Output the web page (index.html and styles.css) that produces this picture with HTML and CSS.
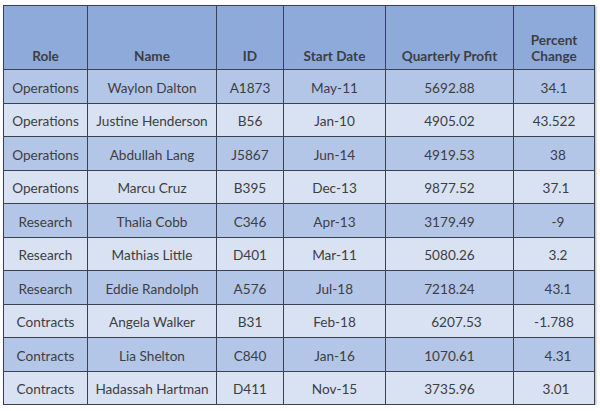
FILE: index.html
```html
<!DOCTYPE html>
<html>
<head>
<meta charset="utf-8">
<link rel="stylesheet" href="styles.css">
</head>
<body>
<table class="data">
  <colgroup>
    <col class="c-role"><col class="c-name"><col class="c-id"><col class="c-date"><col class="c-profit"><col class="c-pct">
  </colgroup>
  <thead>
    <tr><th>Role</th><th>Name</th><th>ID</th><th>Start Date</th><th>Quarterly Profit</th><th>Percent<br>Change</th></tr>
  </thead>
  <tbody>
    <tr><td>Operations</td><td>Waylon Dalton</td><td>A1873</td><td>May-11</td><td>5692.88</td><td>34.1</td></tr>
    <tr><td>Operations</td><td>Justine Henderson</td><td>B56</td><td>Jan-10</td><td>4905.02</td><td>43.522</td></tr>
    <tr><td>Operations</td><td>Abdullah Lang</td><td>J5867</td><td>Jun-14</td><td>4919.53</td><td class="nudge">38</td></tr>
    <tr><td>Operations</td><td>Marcu Cruz</td><td>B395</td><td>Dec-13</td><td>9877.52</td><td class="nudge-s">37.1</td></tr>
    <tr><td>Research</td><td>Thalia Cobb</td><td>C346</td><td>Apr-13</td><td>3179.49</td><td class="nudge">-9</td></tr>
    <tr><td>Research</td><td>Mathias Little</td><td>D401</td><td>Mar-11</td><td>5080.26</td><td class="nudge">3.2</td></tr>
    <tr><td>Research</td><td>Eddie Randolph</td><td>A576</td><td>Jul-18</td><td>7218.24</td><td class="nudge">43.1</td></tr>
    <tr><td>Contracts</td><td>Angela Walker</td><td>B31</td><td>Feb-18</td><td class="nudge-l">6207.53</td><td>-1.788</td></tr>
    <tr><td>Contracts</td><td>Lia Shelton</td><td>C840</td><td>Jan-16</td><td>1070.61</td><td class="nudge">4.31</td></tr>
    <tr><td>Contracts</td><td>Hadassah Hartman</td><td>D411</td><td>Nov-15</td><td>3735.96</td><td class="nudge-s">3.01</td></tr>
  </tbody>
</table>
</body>
</html>
```
FILE: styles.css
```css
html, body {
  margin: 0;
  background: #ffffff;
}
body {
  padding: 5px 0 0 3px;
  font-family: Lato, "Liberation Sans", sans-serif;
  color: #3d3e42;
}
.data {
  border-collapse: collapse;
  table-layout: fixed;
  width: 592px;
  font-size: 13.6px;
  border: 1px solid #6b7388;
  box-shadow: 1px 1px 2px rgba(0, 0, 0, 0.35);
}
.c-role { width: 84px; }
.c-name { width: 129px; }
.c-id { width: 67px; }
.c-date { width: 102px; }
.c-profit { width: 128px; }
.c-pct { width: 81px; }
.data th, .data td {
  border: 1px solid #3c4152;
  text-align: center;
  padding: 0 2px;
}
.data th {
  background: #8eaadb;
  height: 58px;
  vertical-align: bottom;
  padding-bottom: 5px;
  font-weight: 700;
  line-height: 16px;
}
.data td {
  height: 29.5px;
  padding-top: 3px;
  line-height: 16px;
}
.data td.nudge { padding-left: 10px; }
.data td.nudge-s { padding-left: 6px; }
.data td.nudge-l { padding-left: 16px; }
.data tbody tr:nth-child(odd) td { background: #b4c6e7; }
.data tbody tr:nth-child(even) td { background: #d9e2f3; }
```
